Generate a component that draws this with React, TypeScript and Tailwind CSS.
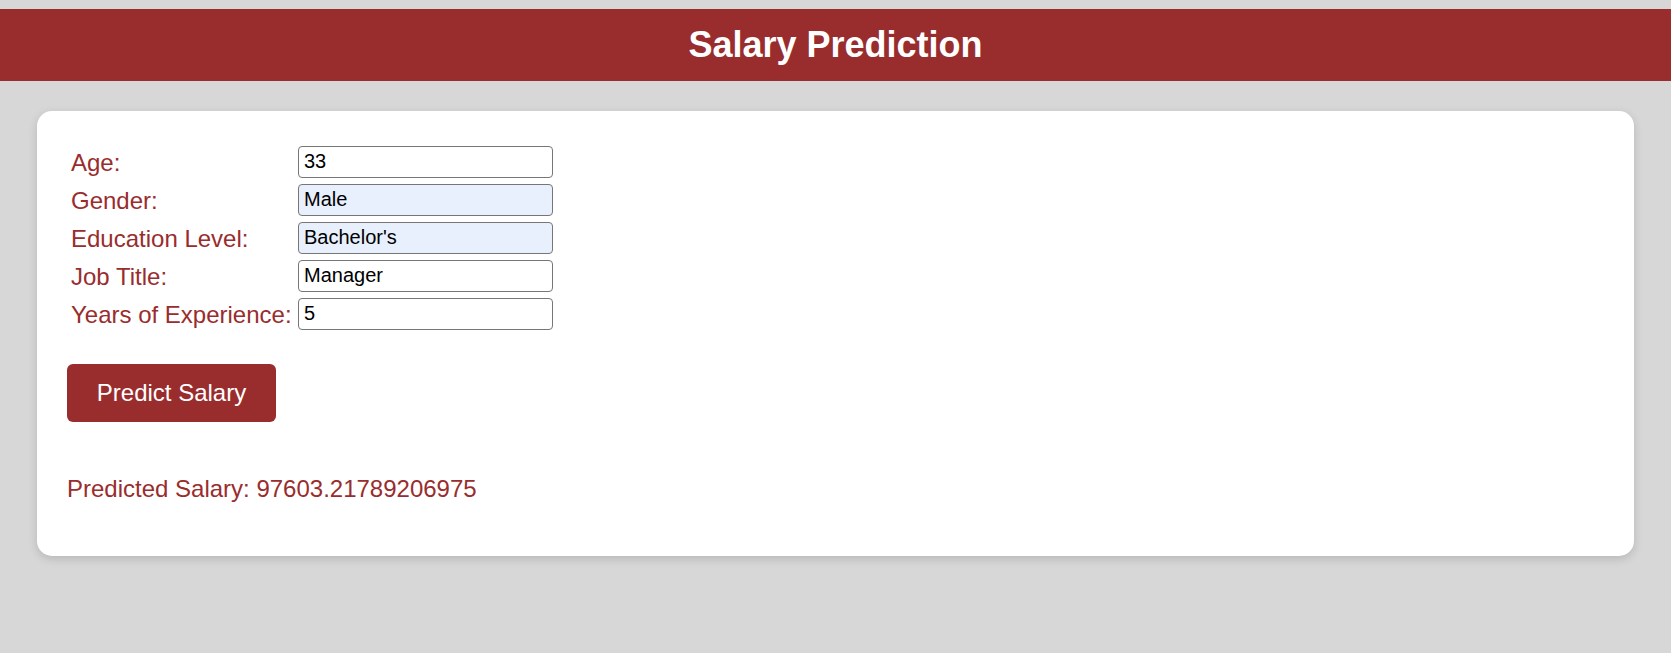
import React from "react";

const rows: { label: string; value: string; filled?: boolean }[] = [
  { label: "Age:", value: "33" },
  { label: "Gender:", value: "Male", filled: true },
  { label: "Education Level:", value: "Bachelor's", filled: true },
  { label: "Job Title:", value: "Manager" },
  { label: "Years of Experience:", value: "5" },
];

export default function App() {
  return (
    <div
      className="min-h-screen bg-[#d7d7d7] pt-[9px]"
      style={{ fontFamily: '"Liberation Sans", Arial, sans-serif' }}
    >
      <header className="h-[72px] bg-[#992d2e] flex items-center justify-center">
        <h1 className="text-[36px] font-bold text-white leading-normal">Salary Prediction</h1>
      </header>
      <div className="mx-[37px] mt-[30px] bg-white rounded-[15px] shadow-[0_3px_10px_rgba(0,0,0,0.15)] px-[30px] pt-[35px] pb-[49px]">
        <div className="grid grid-cols-[227px_255px] gap-y-[6px] pl-[4px]">
          {rows.map((r) => (
            <React.Fragment key={r.label}>
              <label className="h-[32px] pt-[1px] text-[24px] text-[#992d2e] leading-[32px] whitespace-nowrap">
                {r.label}
              </label>
              <input
                readOnly
                value={r.value}
                className={`h-[32px] w-[255px] border border-[#767676] rounded-[4px] pl-[5px] pb-[2px] text-[20px] text-black outline-none ${
                  r.filled ? "bg-[#e8f0fe]" : "bg-white"
                }`}
                style={{ fontFamily: '"Liberation Sans", Arial, sans-serif' }}
              />
            </React.Fragment>
          ))}
        </div>
        <button className="mt-[34px] h-[58px] w-[209px] rounded-[6px] bg-[#992d2e] text-white text-[24px] leading-normal">
          Predict Salary
        </button>
        <p className="mt-[49px] text-[24px] text-[#992d2e] leading-normal">
          Predicted Salary: 97603.21789206975
        </p>
      </div>
    </div>
  );
}
